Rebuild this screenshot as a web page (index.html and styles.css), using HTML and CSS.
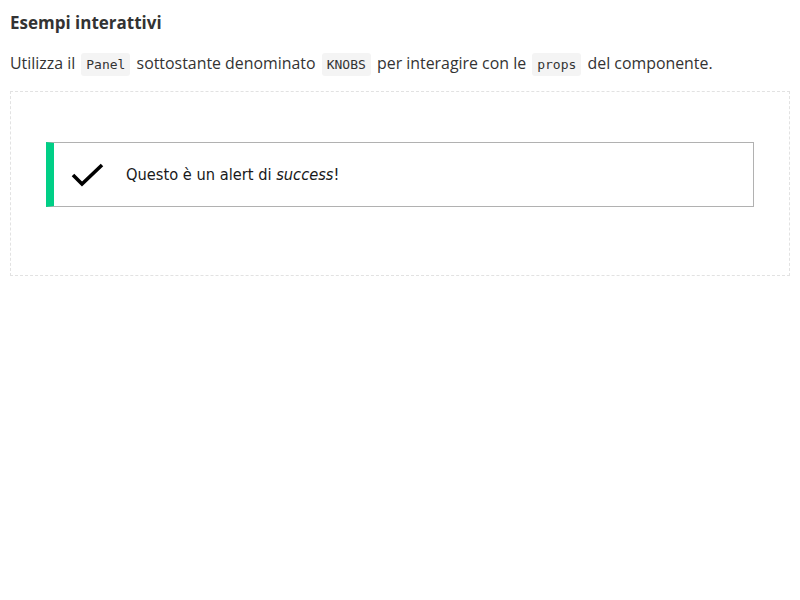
FILE: index.html
```html
<!DOCTYPE html>
<html lang="it">
<head>
<meta charset="utf-8">
<link rel="stylesheet" href="styles.css">
</head>
<body>
<h3 class="title">Esempi interattivi</h3>
<p class="intro">Utilizza il <code class="chip">Panel</code> sottostante denominato <code class="chip">KNOBS</code> per interagire con le <code class="chip">props</code> del componente.</p>
<div class="story">
  <div class="alert">
    <svg class="check" width="34" height="26" viewBox="0 0 34 26"><path d="M2 13 L11 22 L31 3" fill="none" stroke="#000" stroke-width="3.6"/></svg>
    <p class="alert-text">Questo è un alert di <em>success</em>!</p>
  </div>
</div>
</body>
</html>
```
FILE: styles.css
```css
body {
  margin: 0;
  padding: 0 10px;
  font-family: "Open Sans", "Noto Sans", sans-serif;
  color: #333333;
  background: #ffffff;
}
.title {
  margin: 0;
  padding-top: 12px;
  font-size: 17px;
  line-height: 22px;
  font-weight: 700;
  color: #333333;
}
.intro {
  margin: 17px 0 0;
  font-size: 15.9px;
  line-height: 24px;
}
.chip {
  font-family: "DejaVu Sans Mono", monospace;
  font-size: 13px;
  line-height: 1;
  background: #f4f4f4;
  border-radius: 3px;
  padding: 4px 5px;
  margin: 0 2px;
  color: #333;
}
.story {
  margin-top: 16px;
  border: 1px dashed #e2e2e2;
  padding: 50px 35px 68px;
}
.alert {
  display: flex;
  align-items: center;
  height: 65px;
  box-sizing: border-box;
  border: 1px solid #b1b1b1;
  border-left: 8px solid #00cf86;
}
.check {
  margin-left: 17px;
  flex: none;
}
.alert-text {
  margin: 0 0 0 21px;
  font-family: "DejaVu Sans Condensed", "DejaVu Sans", sans-serif;
  font-size: 16.3px;
  color: #19191a;
}
```
